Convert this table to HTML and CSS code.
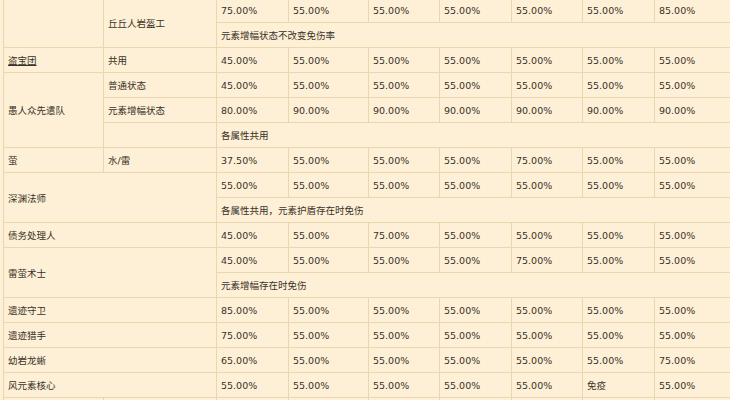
FILE: index.html
```html
<!DOCTYPE html>
<html lang="zh">
<head>
<meta charset="utf-8">
<link rel="stylesheet" href="styles.css">
</head>
<body>
<table class="res">
  <colgroup>
    <col class="c-name"><col class="c-sub"><col class="c-v1"><col class="c-v2"><col class="c-v3"><col class="c-v4"><col class="c-v5"><col class="c-v6"><col class="c-v7">
  </colgroup>
  <tbody>
    <tr><td rowspan="2"></td><td rowspan="2">丘丘人岩盔工</td><td>75.00%</td><td>55.00%</td><td>55.00%</td><td>55.00%</td><td>55.00%</td><td>55.00%</td><td>85.00%</td></tr>
    <tr><td colspan="7">元素增幅状态不改变免伤率</td></tr>
    <tr><td><a class="lnk">盗宝团</a></td><td>共用</td><td>45.00%</td><td>55.00%</td><td>55.00%</td><td>55.00%</td><td>55.00%</td><td>55.00%</td><td>55.00%</td></tr>
    <tr><td rowspan="3">愚人众先遣队</td><td>普通状态</td><td>45.00%</td><td>55.00%</td><td>55.00%</td><td>55.00%</td><td>55.00%</td><td>55.00%</td><td>55.00%</td></tr>
    <tr><td>元素增幅状态</td><td>80.00%</td><td>90.00%</td><td>90.00%</td><td>90.00%</td><td>90.00%</td><td>90.00%</td><td>90.00%</td></tr>
    <tr><td></td><td colspan="7">各属性共用</td></tr>
    <tr><td>萤</td><td>水/雷</td><td>37.50%</td><td>55.00%</td><td>55.00%</td><td>55.00%</td><td>75.00%</td><td>55.00%</td><td>55.00%</td></tr>
    <tr><td colspan="2" rowspan="2">深渊法师</td><td>55.00%</td><td>55.00%</td><td>55.00%</td><td>55.00%</td><td>55.00%</td><td>55.00%</td><td>55.00%</td></tr>
    <tr><td colspan="7">各属性共用，元素护盾存在时免伤</td></tr>
    <tr><td colspan="2">债务处理人</td><td>45.00%</td><td>55.00%</td><td>75.00%</td><td>55.00%</td><td>55.00%</td><td>55.00%</td><td>55.00%</td></tr>
    <tr><td colspan="2" rowspan="2">雷萤术士</td><td>45.00%</td><td>55.00%</td><td>55.00%</td><td>55.00%</td><td>75.00%</td><td>55.00%</td><td>55.00%</td></tr>
    <tr><td colspan="7">元素增幅存在时免伤</td></tr>
    <tr><td colspan="2">遗迹守卫</td><td>85.00%</td><td>55.00%</td><td>55.00%</td><td>55.00%</td><td>55.00%</td><td>55.00%</td><td>55.00%</td></tr>
    <tr><td colspan="2">遗迹猎手</td><td>75.00%</td><td>55.00%</td><td>55.00%</td><td>55.00%</td><td>55.00%</td><td>55.00%</td><td>55.00%</td></tr>
    <tr><td colspan="2">幼岩龙蜥</td><td>65.00%</td><td>55.00%</td><td>55.00%</td><td>55.00%</td><td>55.00%</td><td>55.00%</td><td>75.00%</td></tr>
    <tr><td colspan="2">风元素核心</td><td>55.00%</td><td>55.00%</td><td>55.00%</td><td>55.00%</td><td>55.00%</td><td>免疫</td><td>55.00%</td></tr>
    <tr><td></td><td></td><td></td><td></td><td></td><td></td><td></td><td></td><td></td></tr>
  </tbody>
</table>
</body>
</html>
```

FILE: styles.css
```css
html, body {
  margin: 0;
  padding: 0;
  background: #fdf0d6;
}
body {
  overflow: hidden;
}
.res {
  border-collapse: collapse;
  table-layout: fixed;
  width: 730px;
  margin: -3px 0 0 3px;
  font-family: "DejaVu Sans", "Noto Sans CJK SC", sans-serif;
  font-size: 9.5px;
  color: #3a3128;
}
.res td {
  border: 1px solid #ead7ae;
  height: 24px;
  padding: 0 4px;
  text-align: left;
  vertical-align: middle;
  white-space: nowrap;
  overflow: hidden;
}
.c-name { width: 100px; }
.c-sub { width: 113px; }
.c-v1 { width: 72px; }
.c-v2 { width: 80px; }
.c-v3 { width: 71px; }
.c-v4 { width: 72px; }
.c-v5 { width: 71px; }
.c-v6 { width: 72px; }
.c-v7 { width: 79px; }
.lnk {
  color: #3a3128;
  text-decoration: underline;
}
```
